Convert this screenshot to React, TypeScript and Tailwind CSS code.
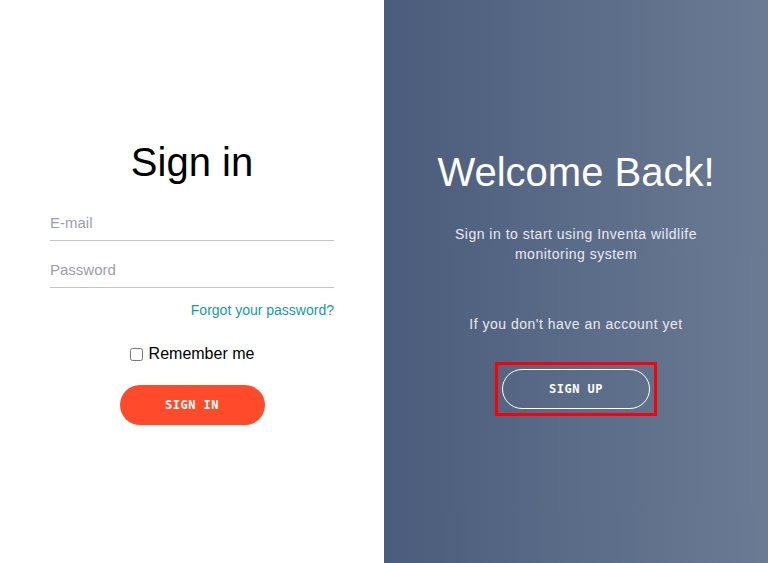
import * as React from 'react';

const App = () => {
  const [remember, setRemember] = React.useState(false);

  return (
    <main className="flex h-screen w-full font-['Liberation_Sans',Arial,sans-serif]">
      {/* sign in form */}
      <section className="flex w-1/2 flex-col items-center justify-center bg-white pt-[1px]">
        <div className="text-[40px] leading-[46px] text-black">Sign in</div>

        <input
          type="email"
          placeholder="E-mail"
          className="mt-[20px] h-[36px] w-[284px] border-b border-[#c4c4c4] text-[15px] text-black outline-none placeholder:text-[#9e9ea7]"
        />
        <input
          type="password"
          placeholder="Password"
          className="mt-[11px] h-[36px] w-[284px] border-b border-[#c4c4c4] text-[15px] text-black outline-none placeholder:text-[#9e9ea7]"
        />

        <div className="mt-[14px] flex w-[284px] justify-end">
          <a href="#" className="text-[14px] leading-[16px] text-[#169c9c]">
            Forgot your password?
          </a>
        </div>

        <label className="mt-[27px] flex items-center text-[16px] leading-[18px] text-black">
          <input
            type="checkbox"
            checked={remember}
            onChange={() => setRemember(!remember)}
            className="mr-[6px] h-[13px] w-[13px]"
          />
          Remember me
        </label>

        <button className="mt-[22px] h-[40px] w-[145px] rounded-full bg-[#ff4b2b] font-['DejaVu_Sans_Mono',monospace] text-[12px] font-bold tracking-[0.5px] text-white">
          SIGN IN
        </button>
      </section>

      {/* welcome panel */}
      <section className="flex w-1/2 flex-col items-center justify-center bg-gradient-to-r from-[#4b5c7c] to-[#6b7b94] pt-[1px] text-center">
        <div className="text-[40px] leading-[46px] text-white">Welcome Back!</div>
        <p className="mt-[29px] w-[300px] text-[14px] leading-[20px] tracking-[0.5px] text-[#e8eaf0]">
          Sign in to start using Inventa wildlife monitoring system
        </p>
        <p className="mt-[50px] text-[14px] leading-[20px] tracking-[0.5px] text-[#e8eaf0]">
          If you don't have an account yet
        </p>
        <div className="mt-[28px] border-[3px] border-[#ff0000] p-[4px]">
          <button className="block h-[40px] w-[148px] rounded-full border border-white font-['DejaVu_Sans_Mono',monospace] text-[12px] font-bold tracking-[0.5px] text-white">
            SIGN UP
          </button>
        </div>
      </section>
    </main>
  );
};

export default App;
